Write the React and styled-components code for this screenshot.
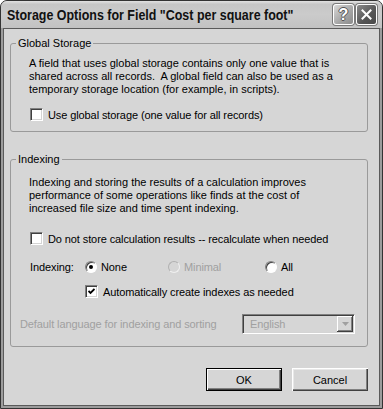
import React from 'react';
import styled, { createGlobalStyle } from 'styled-components';

const Global = createGlobalStyle`
  html, body { margin: 0; padding: 0; background: #ffffff; }
  body { font-family: "Liberation Sans", Arial, sans-serif; font-size: 11px; color: #000; }
  * { box-sizing: border-box; }
`;

const Window = styled.div`
  width: 383px;
  height: 409px;
  display: flex;
  flex-direction: column;
  background: #9c9c9c;
  border: 1px solid #333;
  border-radius: 7px 7px 0 0;
  overflow: hidden;
`;

const TitleBar = styled.div`
  height: 27px;
  flex: none;
  display: flex;
  align-items: center;
  padding: 0 5px 0 6px;
  background: linear-gradient(#e2e2e2 0%, #c6c6c6 12%, #cbcbcb 50%, #c2c2c2 100%);
`;

const Title = styled.div`
  flex: 1;
  min-width: 0;
  font-family: "Liberation Sans", Arial, sans-serif;
  font-weight: bold;
  font-size: 15px;
  color: #111;
  white-space: nowrap;
  transform: scaleX(0.83);
  transform-origin: left center;
`;

const TitleButton = styled.div`
  width: 21px;
  height: 21px;
  flex: none;
  margin-left: 2px;
  border: 1px solid #fff;
  border-radius: 3px;
  display: flex;
  align-items: center;
  justify-content: center;
  background: ${p => (p.$close
    ? 'linear-gradient(135deg, #8a8a8a, #555 60%, #4a4a4a)'
    : 'linear-gradient(135deg, #d8d8d8, #a4a4a4 60%, #8c8c8c)')};
  box-shadow: 0 0 0 1px #7a7a7a;
`;

const HelpMark = styled.span`
  font-family: "Liberation Sans", Arial, sans-serif;
  font-weight: bold;
  font-size: 16px;
  line-height: 16px;
  color: #fff;
  text-shadow: 1px 0 0 #555, -1px 0 0 #555, 0 1px 0 #555, 0 -1px 0 #555;
`;

const Client = styled.div`
  flex: 1;
  margin: 0 2px 2px;
  border: 1px solid #5a5a5a;
  background: #d6d6d6;
  padding: 14px 11px 0 6px;
  display: flex;
  flex-direction: column;
`;

const Group = styled.div`
  position: relative;
  border: 1px solid #9a9a9a;
  border-radius: 3px;
  margin-top: ${p => p.$top || 0}px;
  padding: ${p => p.$pad};
  display: flex;
  flex-direction: column;
`;

const Legend = styled.span`
  position: absolute;
  left: 5px;
  top: -7px;
  padding: 0 2px;
  line-height: 13px;
  background: #d6d6d6;
`;

const Para = styled.p`
  margin: 0 0 0 ${p => p.$indent || 0}px;
  line-height: 13px;
`;

const Row = styled.label`
  display: flex;
  align-items: center;
  height: 13px;
  margin-top: ${p => p.$mt || 0}px;
  margin-left: ${p => p.$ml || 0}px;
  letter-spacing: -0.1px;
  white-space: nowrap;
`;

const Box = styled.span`
  width: 13px;
  height: 13px;
  flex: none;
  margin-right: 5px;
  background: #fff;
  border-top: 1px solid #808080;
  border-left: 1px solid #808080;
  border-bottom: 1px solid #fff;
  border-right: 1px solid #fff;
  box-shadow: inset 1px 1px 0 #404040, inset -1px -1px 0 #d4d4d4;
  display: flex;
  align-items: center;
  justify-content: center;
`;

const Radio = styled.span`
  width: 12px;
  height: 12px;
  flex: none;
  margin-right: 4px;
  border-radius: 50%;
  background: ${p => (p.$disabled ? '#d6d6d6' : '#fff')};
  border: 1px solid;
  border-color: ${p => (p.$disabled ? '#b0b0b0 #f0f0f0 #f0f0f0 #b0b0b0' : '#808080 #fff #fff #808080')};
  box-shadow: ${p => (p.$disabled ? 'none' : 'inset 1px 1px 0 #404040')};
  display: flex;
  align-items: center;
  justify-content: center;
`;

const Dot = styled.span`
  width: 4px;
  height: 4px;
  border-radius: 50%;
  background: #000;
`;

const Option = styled.span`
  display: flex;
  align-items: center;
  width: ${p => (p.$w ? `${p.$w}px` : 'auto')};
  color: ${p => (p.$disabled ? '#a0a0a0' : '#000')};
`;

const LangRow = styled.div`
  display: flex;
  align-items: center;
  justify-content: space-between;
  margin-top: 16px;
  padding-right: 12px;
  height: 20px;
  color: #a0a0a0;
  letter-spacing: -0.1px;
`;

const Select = styled.div`
  width: 113px;
  height: 20px;
  display: flex;
  align-items: center;
  justify-content: space-between;
  padding: 0 1px 0 7px;
  border-top: 1px solid #808080;
  border-left: 1px solid #808080;
  border-bottom: 1px solid #fff;
  border-right: 1px solid #fff;
  box-shadow: inset 1px 1px 0 #404040, inset -1px -1px 0 #d4d4d4;
  background: #d6d6d6;
  color: #a0a0a0;
`;

const Arrow = styled.span`
  width: 16px;
  height: 16px;
  display: flex;
  align-items: center;
  justify-content: center;
  background: #d6d6d6;
  box-shadow: inset -1px -1px 0 #404040, inset 1px 1px 0 #fff, inset -2px -2px 0 #808080;
`;

const Buttons = styled.div`
  display: flex;
  justify-content: flex-end;
  gap: 10px;
  margin-top: 21px;
`;

const Button = styled.button`
  width: 76px;
  height: 23px;
  padding: 0;
  font-family: "Liberation Sans", Arial, sans-serif;
  font-size: 11px;
  color: #000;
  background: #d6d6d6;
  border: ${p => (p.$default ? '1px solid #000' : 'none')};
  box-shadow: ${p => (p.$default
    ? 'inset 1px 1px 0 #fff, inset -1px -1px 0 #404040, inset -2px -2px 0 #808080'
    : 'inset 1px 1px 0 #fff, inset -1px -1px 0 #404040, inset -2px -2px 0 #808080, inset 2px 2px 0 #e8e8e8')};
`;

export default function App() {
  return (
    <>
      <Global />
      <Window>
        <TitleBar>
          <Title>Storage Options for Field "Cost per square foot"</Title>
          <TitleButton>
            <HelpMark>?</HelpMark>
          </TitleButton>
          <TitleButton $close>
            <svg width="11" height="11" viewBox="0 0 11 11">
              <path d="M1.5 1.5 L9.5 9.5 M9.5 1.5 L1.5 9.5" stroke="#fff" strokeWidth="2" strokeLinecap="square" />
            </svg>
          </TitleButton>
        </TitleBar>
        <Client>
          <Group $pad="13px 0 10px 18px">
            <Legend>Global Storage</Legend>
            <Para>
              A field that uses global storage contains only one value that is<br />
              shared across all records.&nbsp; A global field can also be used as a<br />
              temporary storage location (for example, in scripts).
            </Para>
            <Row $mt={12} $ml={1}>
              <Box />
              Use global storage (one value for all records)
            </Row>
          </Group>
          <Group $top={27} $pad="16px 0 12px 9px">
            <Legend>Indexing</Legend>
            <Para $indent={9}>
              Indexing and storing the results of a calculation improves<br />
              performance of some operations like finds at the cost of<br />
              increased file size and time spent indexing.
            </Para>
            <Row $mt={17} $ml={10}>
              <Box />
              Do not store calculation results -- recalculate when needed
            </Row>
            <Row $mt={15} $ml={10}>
              <Option $w={55}>Indexing:</Option>
              <Option $w={83}><Radio><Dot /></Radio>None</Option>
              <Option $w={97} $disabled><Radio $disabled />Minimal</Option>
              <Option><Radio />All</Option>
            </Row>
            <Row $mt={12} $ml={65}>
              <Box>
                <svg width="7" height="7" viewBox="0 0 7 7">
                  <path d="M0.5 3 L2.5 5 L6.5 1" stroke="#000" strokeWidth="1.8" fill="none" />
                </svg>
              </Box>
              Automatically create indexes as needed
            </Row>
            <LangRow>
              <span>Default language for indexing and sorting</span>
              <Select>
                <span>English</span>
                <Arrow>
                  <svg width="7" height="4" viewBox="0 0 7 4">
                    <path d="M0 0 H7 L3.5 4 Z" fill="#a0a0a0" />
                  </svg>
                </Arrow>
              </Select>
            </LangRow>
          </Group>
          <Buttons>
            <Button $default>OK</Button>
            <Button>Cancel</Button>
          </Buttons>
        </Client>
      </Window>
    </>
  );
}
